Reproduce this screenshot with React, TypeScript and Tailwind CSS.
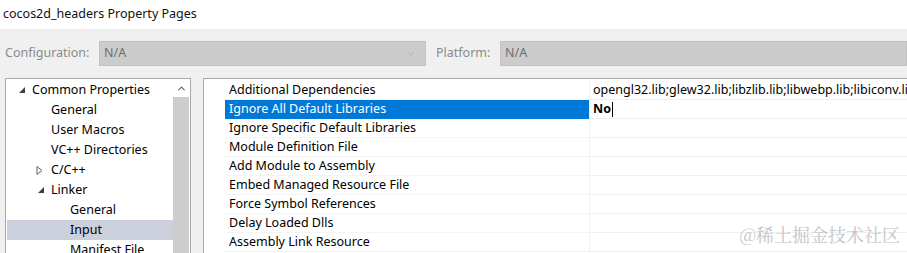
import { ChevronDown, ChevronUp } from "lucide-react";

const font = { fontFamily: '"Noto Sans", "Noto Sans CJK SC", sans-serif' };

type TreeItem = { label: string; level: number; arrow?: "open" | "closed"; selected?: boolean };

const tree: TreeItem[] = [
  { label: "Common Properties", level: 0, arrow: "open" },
  { label: "General", level: 1 },
  { label: "User Macros", level: 1 },
  { label: "VC++ Directories", level: 1 },
  { label: "C/C++", level: 1, arrow: "closed" },
  { label: "Linker", level: 1, arrow: "open" },
  { label: "General", level: 2 },
  { label: "Input", level: 2, selected: true },
  { label: "Manifest File", level: 2 },
];

const props = [
  { name: "Additional Dependencies", value: "opengl32.lib;glew32.lib;libzlib.lib;libwebp.lib;libiconv.lib;%(AdditionalDependencies)" },
  { name: "Ignore All Default Libraries", value: "No", selected: true },
  { name: "Ignore Specific Default Libraries", value: "" },
  { name: "Module Definition File", value: "" },
  { name: "Add Module to Assembly", value: "" },
  { name: "Embed Managed Resource File", value: "" },
  { name: "Force Symbol References", value: "" },
  { name: "Delay Loaded Dlls", value: "" },
  { name: "Assembly Link Resource", value: "" },
];

const arrowPos = ["w-[25px]", "w-[44px]", "w-[63px]"];

function Arrow({ kind }: { kind: "open" | "closed" }) {
  if (kind === "open") {
    return (
      <svg width="7" height="7" viewBox="0 0 7 7" className="mr-[6px]">
        <polygon points="6,0 6,6 0,6" fill="#404040" />
      </svg>
    );
  }
  return (
    <svg width="7" height="9" viewBox="0 0 7 9" className="mr-[8px]">
      <polygon points="1,0.5 6,4.5 1,8.5" fill="none" stroke="#606060" strokeWidth="1" />
    </svg>
  );
}

export default function App() {
  return (
    <div className="relative w-[907px] h-[253px] overflow-hidden bg-[#f0f0f0] text-[12.5px] text-black" style={font}>
      <div className="h-[29px] bg-white flex items-center pl-[3px] text-[12.5px] text-[#111]">
        cocos2d_headers Property Pages
      </div>

      <div className="h-[49px] flex items-center text-[#8a8a8a]">
        <span className="pl-[5px] w-[99px] shrink-0">Configuration:</span>
        <div className="w-[327px] shrink-0 h-[25px] bg-[#cccccc] border border-[#c2c2c2] flex items-center justify-between pl-[4px] pr-[8px] text-[#6e6e6e]">
          <span>N/A</span>
          <ChevronDown size={12} strokeWidth={1.2} className="text-[#a8a8a8]" />
        </div>
        <span className="pl-[10px] w-[74px] shrink-0">Platform:</span>
        <div className="flex-1 h-[25px] bg-[#cccccc] border border-[#c2c2c2] flex items-center pl-[4px] text-[#6e6e6e]">
          N/A
        </div>
      </div>

      <div className="flex h-[200px]">
        <div className="ml-[5px] w-[186px] shrink-0 bg-white border border-[#a9a9a9] flex">
          <div className="flex-1 min-w-0 pt-[1px]">
            {tree.map((t, i) => (
              <div
                key={i}
                className={`h-[20px] flex items-center ml-[1px] whitespace-nowrap ${t.selected ? "bg-[#ccd0dc]" : ""}`}
              >
                {t.arrow ? (
                  <div className={`${arrowPos[t.level]} flex justify-end shrink-0`}>
                    <Arrow kind={t.arrow} />
                  </div>
                ) : (
                  <div className={`${arrowPos[t.level]} shrink-0`} />
                )}
                <span>{t.label}</span>
              </div>
            ))}
          </div>
          <div className="w-[16px] shrink-0 mr-[1px] flex flex-col">
            <div className="h-[18px] flex items-center justify-center">
              <ChevronUp size={11} strokeWidth={2.2} className="text-[#606060]" />
            </div>
            <div className="flex-1 bg-[#cdcdcd]" />
          </div>
        </div>

        <div className="ml-[12px] flex-1 min-w-0 bg-white border-t border-l border-[#a9a9a9] pt-[2px]">
          {props.map((p, i) => (
            <div key={i} className="h-[19px] flex">
              <div className="w-[21px] shrink-0" />
              <div
                className={`w-[364px] shrink-0 flex items-center pl-[4px] border-b whitespace-nowrap ${
                  p.selected ? "bg-[#0078d7] text-white border-[#0078d7]" : "border-[#f4f4f4]"
                }`}
              >
                {p.name}
              </div>
              <div className="w-[1px] shrink-0 bg-[#f0f0f0]" />
              <div className="flex-1 min-w-0 flex items-center pl-[3px] border-b border-[#f0f0f0] whitespace-nowrap overflow-hidden">
                {p.selected ? (
                  <span className="font-bold flex items-center">
                    No<span className="w-[1px] h-[15px] bg-black ml-[1px]" />
                  </span>
                ) : (
                  p.value
                )}
              </div>
            </div>
          ))}
        </div>
      </div>

      <div
        className="absolute right-[7px] bottom-[5px] text-[18px] text-[#c4c4c4]"
        style={{ fontFamily: '"Noto Serif CJK SC", "Noto Sans CJK SC", serif' }}
      >
        @稀土掘金技术社区
      </div>
    </div>
  );
}
